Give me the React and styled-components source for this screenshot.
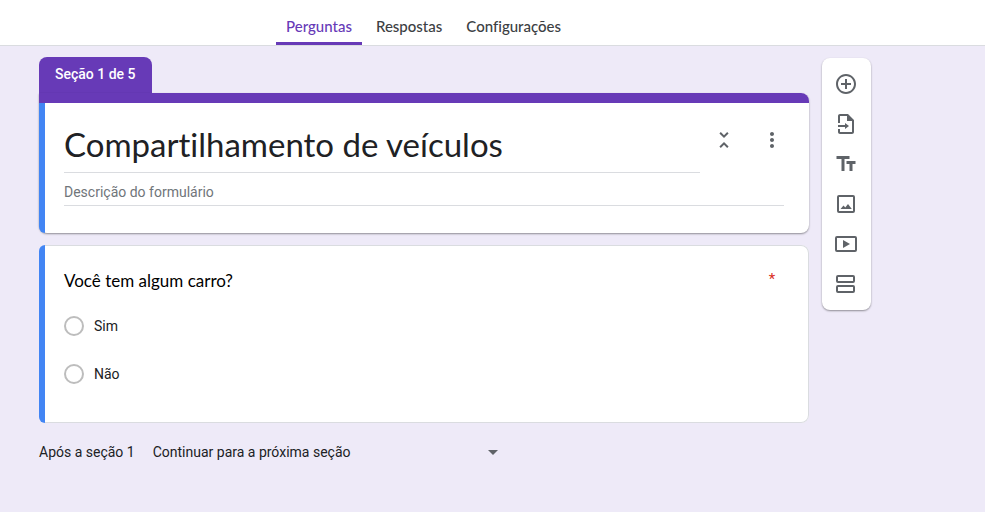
import React, { useState } from 'react';
import styled, { createGlobalStyle } from 'styled-components';
import { MdAddCircleOutline, MdTextFields, MdUnfoldLess, MdMoreVert } from 'react-icons/md';

const GlobalStyle = createGlobalStyle`
* {
    box-sizing: border-box;
}
body {
    margin: 0;
    background: #eeeaf8;
    color: #202124;
    font-family: Roboto, "Liberation Sans", sans-serif;
    font-size: 14px;
    line-height: 20px;
}
button, input, select {
    font: inherit;
    color: inherit;
}
`

const tabs = ['Perguntas', 'Respostas', 'Configurações'];
const options = ['Sim', 'Não'];

const ImportIcon = () => (
    <svg width="24" height="24" viewBox="0 0 24 24" fill="currentColor">
        <path d="M14 2H6c-1.1 0-2 .9-2 2v7h2V4h7v5h5v11H6v-3H4v3c0 1.1.9 2 2 2h12c1.1 0 2-.9 2-2V8l-6-6z"/>
        <path d="M4 13h7v-2l4 3-4 3v-2H4z"/>
    </svg>
)

const ImageIcon = () => (
    <svg width="24" height="24" viewBox="0 0 24 24">
        <rect x="4" y="4" width="16" height="16" rx="1" fill="none" stroke="currentColor" strokeWidth="2"/>
        <path d="M6.5 17l3-3.5 1.8 2L14 12l3.8 5z" fill="currentColor"/>
    </svg>
)

const VideoIcon = () => (
    <svg width="24" height="24" viewBox="0 0 24 24">
        <rect x="2" y="5" width="20" height="14" rx="1" fill="none" stroke="currentColor" strokeWidth="2"/>
        <path d="M9 8l7 4-7 4z" fill="currentColor"/>
    </svg>
)

const SectionIcon = () => (
    <svg width="24" height="24" viewBox="0 0 24 24" fill="none" stroke="currentColor" strokeWidth="2">
        <rect x="3" y="4" width="17" height="6" rx="1"/>
        <rect x="3" y="14" width="17" height="6" rx="1"/>
    </svg>
)

const tools = [
    { label: 'Adicionar pergunta', icon: <MdAddCircleOutline size={24}/> },
    { label: 'Importar perguntas', icon: <ImportIcon/> },
    { label: 'Adicionar título e descrição', icon: <MdTextFields size={24}/> },
    { label: 'Adicionar imagem', icon: <ImageIcon/> },
    { label: 'Adicionar vídeo', icon: <VideoIcon/> },
    { label: 'Adicionar seção', icon: <SectionIcon/> },
];

export default function App() {
    const [tab, setTab] = useState('Perguntas');
    const [title, setTitle] = useState('Compartilhamento de veículos');

    return (
        <>
            <GlobalStyle/>
            <TabBar>
                {tabs.map(name => (
                    <Tab key={name} type="button" $active={name === tab} onClick={() => setTab(name)}>
                        {name}
                    </Tab>
                ))}
            </TabBar>

            <Page>
                <Form>
                    <SectionTag>Seção 1 de 5</SectionTag>

                    {/* Section header: title and description */}
                    <HeaderCard>
                        <Stripe $header/>
                        <HeaderBody>
                            <TitleRow>
                                <TitleInput
                                    aria-label="Título do formulário"
                                    value={title}
                                    onChange={e => setTitle(e.target.value)}
                                />
                                <IconButton $size={48} type="button" aria-label="Recolher seção">
                                    <MdUnfoldLess size={24}/>
                                </IconButton>
                                <IconButton $size={48} type="button" aria-label="Mais opções">
                                    <MdMoreVert size={24}/>
                                </IconButton>
                            </TitleRow>
                            <DescriptionInput aria-label="Descrição do formulário" placeholder="Descrição do formulário"/>
                        </HeaderBody>
                    </HeaderCard>

                    {/* Question */}
                    <QuestionCard>
                        <Stripe/>
                        <QuestionBody>
                            <QuestionRow>
                                <Question id="question">Você tem algum carro?</Question>
                                <Required>*</Required>
                            </QuestionRow>
                            <div role="radiogroup" aria-labelledby="question">
                                {options.map(option => (
                                    <Option key={option}>
                                        <Radio type="radio" name="carro" value={option}/>
                                        {option}
                                    </Option>
                                ))}
                            </div>
                        </QuestionBody>
                    </QuestionCard>

                    {/* Where to go after this section */}
                    <AfterRow>
                        <label htmlFor="after">Após a seção 1</label>
                        <SelectWrapper>
                            <Select id="after">
                                <option>Continuar para a próxima seção</option>
                            </Select>
                            <Arrow width="10" height="5" viewBox="0 0 10 5">
                                <path d="M0 0l5 5 5-5z" fill="currentColor"/>
                            </Arrow>
                        </SelectWrapper>
                    </AfterRow>
                </Form>

                <Toolbar>
                    {tools.map(tool => (
                        <IconButton key={tool.label} $size={40} type="button" aria-label={tool.label}>
                            {tool.icon}
                        </IconButton>
                    ))}
                </Toolbar>
            </Page>
        </>
    );
}

// tabs on top of the page
const TabBar = styled.nav`
display: flex;
gap: 4px;
height: 46px;
padding-left: 276px;
background: #fff;
border-bottom: 1px solid #dadce0;
`

const Tab = styled.button`
padding: 10px 10px 0;
border: 0;
border-bottom: 3px solid ${props => props.$active ? '#673ab7' : 'transparent'};
border-radius: 2px 2px 0 0;
background: none;
color: ${props => props.$active ? '#673ab7' : '#3c4043'};
font-family: Lato, "Liberation Sans", sans-serif;
font-size: 15px;
font-weight: 500;
font-variant-ligatures: none;
cursor: pointer;
`

const Page = styled.main`
display: flex;
align-items: flex-start;
gap: 13px;
padding: 11px 114px 24px 39px;
`

const Form = styled.div`
flex: 1;
min-width: 0;
`

const SectionTag = styled.div`
width: fit-content;
height: 36px;
padding: 7px 16px;
border-radius: 8px 8px 0 0;
background: #673ab7;
color: #fff;
font-weight: 500;
`

const Card = styled.section`
display: flex;
border-radius: 8px;
background: #fff;
`

const HeaderCard = styled(Card)`
border-radius: 0 8px 8px 8px;
box-shadow: 0 1px 2px rgba(0, 0, 0, 0.4);
`

const QuestionCard = styled(Card)`
margin-top: 12px;
`

const Stripe = styled.div`
flex: none;
width: 6px;
background: #4285f4;
border-radius: ${props => props.$header ? '0 0 0 8px' : '8px 0 0 8px'};
border-top: ${props => props.$header ? '10px solid #673ab7' : '0'};
`

const HeaderBody = styled.div`
flex: 1;
min-width: 0;
padding: 13px 25px 27px 19px;
border-top: 10px solid #673ab7;
border-radius: 0 8px 8px 0;
`

const TitleRow = styled.div`
display: flex;
align-items: flex-start;
margin-right: -12px;
`

const TextInput = styled.input`
display: block;
border: 0;
border-bottom: 1px solid #dadce0;
background: none;
outline: none;
`

const TitleInput = styled(TextInput)`
flex: 1;
min-width: 0;
height: 57px;
padding: 8px 0;
font-family: Lato, "Liberation Sans", sans-serif;
font-size: 33px;
font-variant-ligatures: none;
line-height: 40px;
`

const DescriptionInput = styled(TextInput)`
width: 100%;
height: 33px;
padding: 9px 0 3px;
&::placeholder {
    color: #70757a;
    opacity: 1;
}
`

const IconButton = styled.button`
display: flex;
flex: none;
align-items: center;
justify-content: center;
width: ${props => props.$size}px;
height: ${props => props.$size}px;
padding: 0;
border: 0;
background: none;
color: #5f6368;
cursor: pointer;
`

const QuestionBody = styled.div`
flex: 1;
min-width: 0;
padding: 23px 24px 24px 19px;
border: 1px solid #dadce0;
border-left: 0;
border-radius: 0 8px 8px 0;
`

const QuestionRow = styled.div`
display: flex;
justify-content: space-between;
margin-bottom: 9px;
`

const Question = styled.h2`
margin: 0;
color: #000;
font-family: Lato, "Liberation Sans", sans-serif;
font-size: 17px;
font-weight: 400;
line-height: 24px;
`

const Required = styled.span`
width: 24px;
color: #d93025;
font-size: 15px;
text-align: center;
`

const Option = styled.label`
display: flex;
align-items: center;
width: fit-content;
gap: 10px;
height: 48px;
`

const Radio = styled.input`
appearance: none;
width: 20px;
height: 20px;
margin: 0;
border: 2px solid #bdbdbd;
border-radius: 50%;
&:checked {
    border-color: #673ab7;
    background: radial-gradient(#673ab7 5px, transparent 6px);
}
`

const AfterRow = styled.div`
display: flex;
align-items: center;
gap: 18px;
height: 48px;
margin-top: 5px;
`

const SelectWrapper = styled.div`
position: relative;
flex: 0 1 353px;
`

const Select = styled.select`
display: block;
appearance: none;
width: 100%;
height: 48px;
padding: 0 24px 0 0;
border: 0;
background: none;
`

const Arrow = styled.svg`
position: absolute;
top: 22px;
right: 8px;
color: #5f6368;
pointer-events: none;
`

// floating toolbar next to the form
const Toolbar = styled.aside`
flex: none;
width: 49px;
padding: 6px 4px;
margin-top: 1px;
border-radius: 8px;
background: #fff;
box-shadow: 0 1px 2px rgba(0, 0, 0, 0.4);
`
